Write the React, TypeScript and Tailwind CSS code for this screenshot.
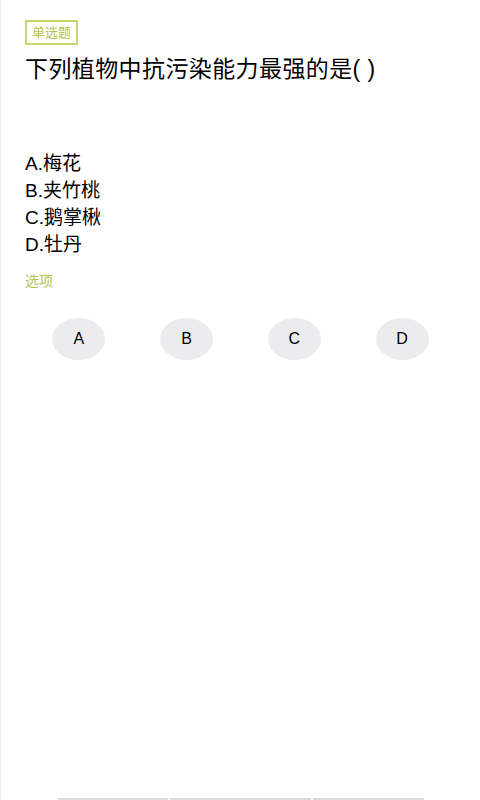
const options = [
  { key: "A", text: "梅花" },
  { key: "B", text: "夹竹桃" },
  { key: "C", text: "鹅掌楸" },
  { key: "D", text: "牡丹" },
];

export default function App() {
  return (
    <div className="relative flex h-[800px] w-[480px] flex-col overflow-hidden border-l border-[#f0f0f0] bg-white font-['Liberation_Sans','Noto_Sans_CJK_SC',sans-serif]">
      <div className="px-6 pt-5">
        <span className="inline-block border-2 border-[#c8d46e] px-[5px] py-[2px] text-[13px] leading-[17px] text-[#b4c54a]">
          单选题
        </span>
        <h1 className="mt-[10px] text-[23px] leading-[28px] tracking-[0.4px] text-black">
          下列植物中抗污染能力最强的是( )
        </h1>

        <div className="mt-[67px] flex flex-col text-[19px] leading-[27px] text-black">
          {options.map(o => (
            <div key={o.key}>
              {o.key}.{o.text}
            </div>
          ))}
        </div>

        <div className="mt-[14px] text-[14px] leading-[18px] text-[#b4c54a]">选项</div>

        <div className="mt-[28px] grid grid-cols-4">
          {options.map(o => (
            <div key={o.key} className="flex justify-center">
              <button className="flex h-[42px] w-[53px] items-center justify-center rounded-[50%] bg-[#ececee] text-[16px] text-black">
                {o.key}
              </button>
            </div>
          ))}
        </div>
      </div>

      <div className="mt-auto flex gap-[2px] pl-[57px]">
        <div className="h-[2px] w-[110px] bg-[#dcdcdc]" />
        <div className="h-[2px] w-[141px] bg-[#dcdcdc]" />
        <div className="h-[2px] w-[111px] bg-[#dcdcdc]" />
      </div>
    </div>
  );
}
